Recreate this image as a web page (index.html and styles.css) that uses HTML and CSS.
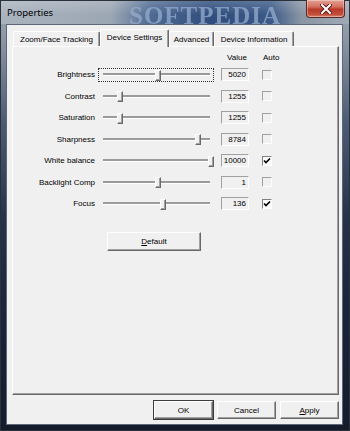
FILE: index.html
```html
<!DOCTYPE html>
<html lang="en">
<head>
    <meta charset="UTF-8">
    <title>Properties</title>
    <link rel="stylesheet" href="styles.css">
</head>
<body>

    <div class="window">
        <div class="titlebar">
            <span class="title">Properties</span>
            <span class="title-mark">SOFTPEDIA</span>
            <div class="close">
                <svg width="12" height="10" viewBox="0 0 12 10">
                    <path d="M2 1 L10 9 M10 1 L2 9" stroke="#5a1a14" stroke-width="4" stroke-linecap="square"/>
                    <path d="M2 1 L10 9 M10 1 L2 9" stroke="#fff" stroke-width="2" stroke-linecap="square"/>
                </svg>
            </div>
        </div>

        <div class="frame">
            <div class="client">
                <div class="tabs">
                    <div class="tab tab-zoom">Zoom/Face Tracking</div>
                    <div class="tab tab-device active">Device Settings</div>
                    <div class="tab tab-adv">Advanced</div>
                    <div class="tab tab-info">Device Information</div>
                </div>

                <div class="panel">
                    <div class="head">
                        <span class="head-value">Value</span>
                        <span class="head-auto">Auto</span>
                    </div>

                    <div class="row">
                        <label>Brightness</label>
                        <div class="slider focused"><div class="track"></div><div class="thumb" style="left: 56px"></div></div>
                        <div class="value">5020</div>
                        <div class="check"></div>
                    </div>
                    <div class="row">
                        <label>Contrast</label>
                        <div class="slider"><div class="track"></div><div class="thumb" style="left: 18px"></div></div>
                        <div class="value">1255</div>
                        <div class="check"></div>
                    </div>
                    <div class="row">
                        <label>Saturation</label>
                        <div class="slider"><div class="track"></div><div class="thumb" style="left: 18px"></div></div>
                        <div class="value">1255</div>
                        <div class="check"></div>
                    </div>
                    <div class="row">
                        <label>Sharpness</label>
                        <div class="slider"><div class="track"></div><div class="thumb" style="left: 96px"></div></div>
                        <div class="value">8784</div>
                        <div class="check"></div>
                    </div>
                    <div class="row">
                        <label>White balance</label>
                        <div class="slider"><div class="track"></div><div class="thumb" style="left: 109px"></div></div>
                        <div class="value">10000</div>
                        <div class="check checked">
                            <svg width="8" height="8" viewBox="0 0 8 8"><path d="M1 3.5 L3 5.5 L7 1.5" stroke="#000" stroke-width="1.6" fill="none"/></svg>
                        </div>
                    </div>
                    <div class="row">
                        <label>Backlight Comp</label>
                        <div class="slider"><div class="track"></div><div class="thumb" style="left: 56px"></div></div>
                        <div class="value">1</div>
                        <div class="check"></div>
                    </div>
                    <div class="row">
                        <label>Focus</label>
                        <div class="slider"><div class="track"></div><div class="thumb" style="left: 61px"></div></div>
                        <div class="value">136</div>
                        <div class="check checked">
                            <svg width="8" height="8" viewBox="0 0 8 8"><path d="M1 3.5 L3 5.5 L7 1.5" stroke="#000" stroke-width="1.6" fill="none"/></svg>
                        </div>
                    </div>

                    <button class="btn btn-default"><u>D</u>efault</button>
                </div>

                <div class="buttons">
                    <button class="btn btn-ok">OK</button>
                    <button class="btn">Cancel</button>
                    <button class="btn"><u>A</u>pply</button>
                </div>
            </div>
        </div>
    </div>

</body>
</html>
```

FILE: styles.css
```css
* {
    box-sizing: border-box;
}

body {
    margin: 0;
    font-family: 'Liberation Sans', Tahoma, sans-serif;
    font-size: 8px;
    color: #000;
    background: #1c2535;
}

.window {
    width: 350px;
    height: 431px;
    display: flex;
    flex-direction: column;
    border: 1px solid #2b313b;
    background: linear-gradient(to bottom, #a2acb8 0, #8a95a3 40px, #4c5c74 120px, #243249 220px, #19233a 320px, #141c2c 100%);
}

/* title bar */
.titlebar {
    height: 23px;
    position: relative;
    display: flex;
    align-items: center;
    padding-left: 6px;
    background:
        linear-gradient(to bottom, rgba(255, 255, 255, 0.18), rgba(255, 255, 255, 0) 60%),
        linear-gradient(to right, #a9b3be 0, #9ca7b4 110px, #4f6a92 150px, #2f4d7c 210px, #3c5a88 270px, #8995a4 300px, #a1abb7 100%);
}

.title {
    font-family: 'Noto Sans', 'Liberation Sans', sans-serif;
    font-size: 9.5px;
    color: #000;
    position: relative;
    z-index: 1;
}

.title-mark {
    position: absolute;
    left: 128px;
    top: 1px;
    font-family: 'Liberation Serif', serif;
    font-weight: bold;
    font-size: 25px;
    letter-spacing: 1px;
    color: rgba(150, 172, 205, 0.75);
    filter: blur(0.6px);
}

.close {
    position: absolute;
    right: 4px;
    top: -1px;
    width: 39px;
    height: 18px;
    border: 1px solid #5c2a24;
    border-top: none;
    border-radius: 0 0 4px 4px;
    background: linear-gradient(to bottom, #e2a195 0, #d4705f 40%, #b8392a 55%, #c4503c 85%, #d8826a 100%);
    display: flex;
    align-items: center;
    justify-content: center;
    box-shadow: inset 0 0 0 1px rgba(255, 255, 255, 0.35);
}

/* frame and client area */
.frame {
    flex: 1;
    padding: 0 6px 5px 5px;
    display: flex;
}

.client {
    flex: 1;
    background: #f0f0f0;
    border: 1px solid #5d6777;
    padding: 4px 3px 0 5px;
    display: flex;
    flex-direction: column;
}

/* tabs */
.tabs {
    height: 17px;
    display: flex;
    align-items: flex-end;
    padding-left: 1px;
}

.tab {
    height: 15px;
    display: flex;
    align-items: center;
    justify-content: center;
    padding-top: 1px;
    border-left: 1px solid #fff;
    border-top: 1px solid #fff;
    border-right: 1px solid #696969;
    box-shadow: inset -1px 0 #a0a0a0;
    border-radius: 2px 2px 0 0;
    white-space: nowrap;
}

.tab-zoom { width: 87px; }
.tab-device { width: 69px; }
.tab-adv { width: 45px; }
.tab-info { width: 80px; }

.tab.active {
    height: 18px;
    margin-bottom: -1px;
    padding-top: 0;
    padding-bottom: 3px;
    background: #f0f0f0;
    position: relative;
    z-index: 1;
}

/* tab page */
.panel {
    height: 349px;
    border-left: 1px solid #fff;
    border-top: 1px solid #fff;
    border-right: 1px solid #696969;
    border-bottom: 1px solid #696969;
    box-shadow: inset -1px -1px #a0a0a0;
    display: flex;
    flex-direction: column;
}

.head {
    display: flex;
    height: 12px;
    align-items: center;
    margin-top: 4px;
    margin-bottom: 1px;
}

.head-value {
    margin-left: 209px;
    width: 28px;
    text-align: center;
    padding-left: 2px;
}

.head-auto {
    margin-left: 13px;
}

.row {
    height: 21.5px;
    display: flex;
    align-items: center;
}

.row label {
    width: 82px;
    text-align: right;
    white-space: nowrap;
}

.slider {
    margin-left: 3px;
    width: 116px;
    height: 14px;
    padding: 0 3px 0 4px;
    display: flex;
    align-items: center;
    position: relative;
    border: 1px solid transparent;
}

.slider.focused {
    border: 1px dotted #333;
}

.track {
    flex: 1;
    height: 3px;
    border-top: 2px solid #9a9a9a;
    border-bottom: 1px solid #fff;
}

.thumb {
    position: absolute;
    top: 1px;
    width: 6px;
    height: 11px;
    background: #f0f0f0;
    border-left: 1px solid #fff;
    border-top: 1px solid #fff;
    border-right: 1px solid #696969;
    border-bottom: 1px solid #696969;
    box-shadow: inset -1px -1px #a0a0a0;
}

.value {
    margin-left: 7px;
    width: 28px;
    height: 13px;
    border-top: 1px solid #a0a0a0;
    border-left: 1px solid #a0a0a0;
    border-right: 1px solid #fff;
    border-bottom: 1px solid #fff;
    text-align: right;
    padding-right: 2px;
    line-height: 11px;
}

.check {
    margin-left: 13px;
    width: 10px;
    height: 10px;
    border-top: 1px solid #a0a0a0;
    border-left: 1px solid #a0a0a0;
    border-right: 1px solid #fff;
    border-bottom: 1px solid #fff;
    background: #f0f0f0;
    display: flex;
    align-items: center;
    justify-content: center;
}

.check.checked {
    border-top-color: #808080;
    border-left-color: #808080;
    background: #fbfbfb;
}

/* buttons */
.btn {
    font-family: inherit;
    font-size: 8px;
    color: #000;
    background: #f0f0f0;
    border: 1px solid;
    border-color: #fff #696969 #696969 #fff;
    box-shadow: inset -1px -1px #a0a0a0;
    padding: 0;
    height: 18px;
    width: 59px;
}

.btn-default {
    margin-top: 17px;
    margin-left: 94px;
    width: 94px;
    height: 19px;
}

.btn-ok {
    outline: 1px solid #3c3c3c;
    outline-offset: 0;
}

.buttons {
    margin-top: 6px;
    display: flex;
    justify-content: flex-end;
    gap: 4px;
}
```
